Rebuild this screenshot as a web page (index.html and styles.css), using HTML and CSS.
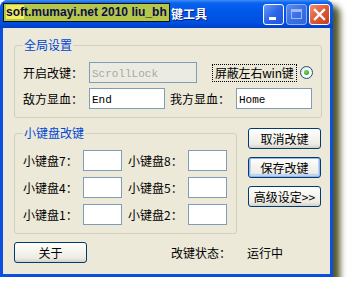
FILE: index.html
```html
<!DOCTYPE html>
<html>

<head>
    <title>改键工具</title>
    <meta charset="utf-8">
    <link rel="stylesheet" href="styles.css">
</head>

<body>
    <div class="window">
        <div class="titlebar">
            <span class="title">键工具</span>
            <div class="title-buttons">
                <span class="tb tb-min"><span class="glyph-min"></span></span>
                <span class="tb tb-max"><span class="glyph-max"></span></span>
                <span class="tb tb-close">
                    <svg width="13" height="13" viewBox="0 0 13 13">
                        <path d="M2 2 L11 11 M11 2 L2 11" stroke="#fff" stroke-width="2.4" stroke-linecap="square" />
                    </svg>
                </span>
            </div>
            <div class="watermark"><span class="wm-hi">sof</span>t.mumayi.net 2010 liu_bh</div>
        </div>

        <div class="client">
            <fieldset class="group group-global">
                <legend>全局设置</legend>
                <div class="row">
                    <span class="label label-long">开启改键：</span>
                    <input class="field field-wide" value="ScrollLock" disabled>
                    <label class="check">
                        <span class="check-text">屏蔽左右win键</span>
                        <span class="radio"><span class="radio-dot"></span></span>
                    </label>
                </div>
                <div class="row">
                    <span class="label label-long">敌方显血：</span>
                    <input class="field field-mid" value="End">
                    <span class="label label-mine">我方显血：</span>
                    <input class="field field-mid" value="Home">
                </div>
            </fieldset>

            <div class="middle">
                <fieldset class="group group-keys">
                    <legend>小键盘改键</legend>
                    <div class="keys">
                        <span class="label">小键盘7：</span>
                        <input class="field field-key">
                        <span class="label">小键盘8：</span>
                        <input class="field field-key">

                        <span class="label">小键盘4：</span>
                        <input class="field field-key">
                        <span class="label">小键盘5：</span>
                        <input class="field field-key">

                        <span class="label">小键盘1：</span>
                        <input class="field field-key">
                        <span class="label">小键盘2：</span>
                        <input class="field field-key">
                    </div>
                </fieldset>

                <div class="side-buttons">
                    <button class="btn">取消改键</button>
                    <button class="btn btn-default">保存改键</button>
                    <button class="btn btn-advanced">高级设定&gt;&gt;</button>
                </div>
            </div>

            <div class="bottom">
                <button class="btn">关于</button>
                <span class="status-label">改键状态：</span>
                <span class="status-value">运行中</span>
            </div>
        </div>
    </div>
</body>

</html>
```

FILE: styles.css
```css
body {
    margin: 0;
    background: #fff;
    font-family: "Noto Sans CJK SC", sans-serif;
    font-size: 12px;
}

.window {
    width: 333px;
    height: 277px;
    background: #0a50e0;
    border-radius: 8px 8px 0 0;
    box-shadow: 6px 6px 6px 1px rgba(55, 55, 5, 0.85);
    display: flex;
    flex-direction: column;
}

/* Title bar */
.titlebar {
    position: relative;
    height: 28px;
    display: flex;
    align-items: center;
    border-radius: 8px 8px 0 0;
    background: linear-gradient(#3d8ef9 0, #0a62ee 3px, #0057ea 40%, #004fe0 80%, #0040c8 100%);
}

.title {
    margin-left: 171px;
    color: #fff;
    font-weight: bold;
    font-size: 12px;
    line-height: 14px;
    text-shadow: 1px 1px 0 #0a1e7a;
}

.title-buttons {
    margin-left: auto;
    margin-right: 3px;
    display: flex;
    gap: 2px;
}

.tb {
    width: 21px;
    height: 21px;
    box-sizing: border-box;
    border: 1px solid #fff;
    border-radius: 3px;
    display: flex;
    align-items: center;
    justify-content: center;
    position: relative;
}

.tb-min {
    background: linear-gradient(135deg, #6a9cf8 0%, #2a66ea 50%, #1f55d8 100%);
}

.tb-max {
    background: linear-gradient(135deg, #5a8cf0 0%, #3a70e6 50%, #3064dc 100%);
    border-color: #8fb0f0;
}

.tb-close {
    background: linear-gradient(135deg, #f09070 0%, #e05a36 50%, #c83c1c 100%);
}

.glyph-min {
    position: absolute;
    left: 5px;
    bottom: 4px;
    width: 7px;
    height: 3px;
    background: #fff;
}

.glyph-max {
    width: 11px;
    height: 10px;
    box-sizing: border-box;
    border: 1px solid #9cb8f0;
    border-top-width: 3px;
}

.watermark {
    position: absolute;
    left: 3px;
    top: 3px;
    width: 167px;
    height: 19px;
    box-sizing: border-box;
    border: 1px solid #111;
    background: #b5c74a;
    color: #0c0c48;
    font-family: "Liberation Sans", Arial, sans-serif;
    font-weight: bold;
    font-size: 12px;
    line-height: 17px;
    padding-left: 2px;
    white-space: nowrap;
}

.wm-hi {
    background: #f2ee58;
}

/* Client area */
.client {
    margin: 0 3px 3px 3px;
    height: 246px;
    background: #ece9d8;
    padding: 10px 0 0 11px;
    box-sizing: border-box;
    color: #000;
}

.group {
    margin: 0;
    padding: 10px 8px 8px 8px;
    border: 1px solid #d0d0bf;
    border-radius: 3px;
    box-sizing: border-box;
    min-width: 0;
}

.group legend {
    padding: 0 1px;
    color: #0046d5;
    line-height: 14px;
}

.group-global {
    width: 308px;
}

.row {
    display: flex;
    align-items: center;
    height: 21px;
}

.row + .row {
    margin-top: 5px;
}

.label {
    line-height: 14px;
    white-space: nowrap;
}

.label-long {
    width: 66px;
}

.label-mine {
    width: 66px;
    margin-left: 5px;
}

.field {
    height: 21px;
    box-sizing: border-box;
    border: 1px solid #7f9db9;
    background: #fff;
    font-family: "Liberation Mono", monospace;
    font-size: 11px;
    padding: 2px 2px 0 2px;
    color: #000;
    margin: 0;
    outline: none;
}

.field:disabled {
    background: #ebebe4;
    color: #aca899;
}

.field-wide {
    width: 108px;
}

.field-mid {
    width: 76px;
}

.field-key {
    width: 39px;
}

.check {
    margin-left: 15px;
    display: flex;
    align-items: center;
}

.check-text {
    border: 1px dotted #000;
    padding: 1px 2px;
    line-height: 14px;
    letter-spacing: -0.2px;
}

.radio {
    margin-left: 3px;
    width: 13px;
    height: 13px;
    box-sizing: border-box;
    border: 1px solid #1c5180;
    border-radius: 50%;
    background: radial-gradient(circle at 60% 60%, #fff 30%, #dcdcd2 100%);
    display: flex;
    align-items: center;
    justify-content: center;
}

.radio-dot {
    width: 5px;
    height: 5px;
    border-radius: 50%;
    background: radial-gradient(circle at 40% 40%, #7ce060 0%, #21a121 80%);
}

/* Key group and side buttons */
.middle {
    display: flex;
    margin-top: 8px;
}

.group-keys {
    width: 223px;
}

.keys {
    display: grid;
    grid-template-columns: 60px 45px 60px 39px;
    row-gap: 6px;
    align-items: center;
}

.keys .label {
    line-height: 21px;
}

.side-buttons {
    margin-left: 11px;
    padding: 2px 0 1px 0;
    display: flex;
    flex-direction: column;
    gap: 8px;
}

.btn-advanced {
    margin-top: auto;
}

.btn {
    width: 73px;
    height: 21px;
    box-sizing: border-box;
    margin: 0;
    padding: 0;
    border: 1px solid #003c74;
    border-radius: 3px;
    background: linear-gradient(#ffffff 0%, #f6f5f0 40%, #ecebe4 80%, #d6d0c5 100%);
    font-family: "Noto Sans CJK SC", sans-serif;
    font-size: 12px;
    line-height: 14px;
    color: #000;
}

.btn-default {
    box-shadow: inset 0 0 0 1px #98b4ea, inset 0 -1px 0 2px #bcd4f6;
}

/* Bottom row */
.bottom {
    margin-top: 8px;
    display: flex;
    align-items: center;
}

.status-label {
    margin-left: 84px;
    line-height: 14px;
}

.status-value {
    margin-left: 16px;
    line-height: 14px;
}
```
